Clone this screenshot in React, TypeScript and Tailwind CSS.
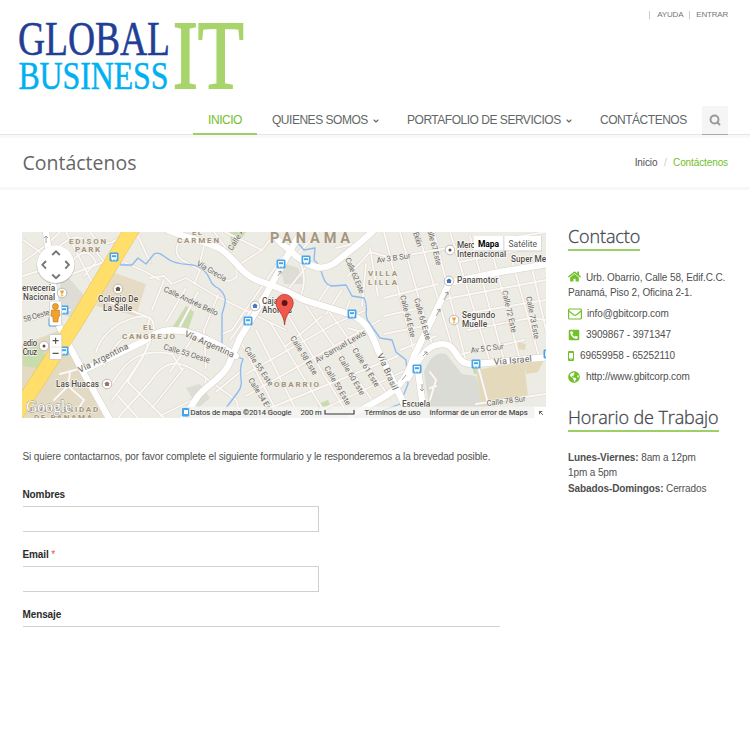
import React from "react";
import { FaHome, FaPhoneSquareAlt, FaGlobeAmericas } from "react-icons/fa";
import { ChevronDown, Search } from "lucide-react";

const SANS = "font-['Liberation_Sans',Arial,sans-serif]";
const OPEN = "font-['Open_Sans',sans-serif]";

function Logo() {
  return (
    <svg className="block h-[96px] w-[260px]" viewBox="0 0 260 96" fontFamily="Liberation Serif, serif">
      <text x="18" y="55" fontSize="48" textLength="152" lengthAdjust="spacingAndGlyphs" fill="#223f94" stroke="#223f94" strokeWidth=".5">GLOBAL</text>
      <text x="18.4" y="88.5" fontSize="41" textLength="150" lengthAdjust="spacingAndGlyphs" fill="#00b0f0" stroke="#00b0f0" strokeWidth=".5">BUSINESS</text>
      <text x="172.8" y="88" fontSize="97" textLength="71" lengthAdjust="spacingAndGlyphs" fill="#a8d56b" stroke="#a8d56b" strokeWidth="1.8">IT</text>
    </svg>
  );
}

const minorRoads = [
  // Edison Park
  "M23 262 L45 246 L60 232", "M23 240 L40 252", "M55 250 C70 236 80 232 92 246 L104 262 L72 274", "M66 232 L96 290",
  "M90 232 C98 244 108 246 116 240", "M72 262 C80 250 90 250 96 262 L84 276", "M23 300 L50 288 L60 320", "M30 320 L70 310", "M23 276 L48 268",
  "M124 262 L146 272 L160 280", "M104 300 L150 318 L146 330", "M138 236 L150 262",
  // El Carmen
  "M180 240 C174 250 176 258 186 262 L200 270 L194 284", "M204 246 L200 262", "M150 278 L164 276 L172 284 L186 278 L216 296 L286 330", "M164 280 L152 310", "M186 288 L166 322", "M198 292 L178 330", "M218 295 L204 330 L206 368", "M236 268 C240 282 226 284 218 276",
  "M225 232 L262 250 L276 232", "M262 250 L240 264", "M300 232 L240 318", "M286 262 L230 340", "M310 262 L286 292", "M214 232 L226 248",
  // El Cangrejo
  "M96 352 C104 326 136 312 150 318 C160 326 150 352 112 400", "M104 366 C116 338 132 328 146 336 C152 350 138 362 128 382", "M112 384 C126 360 140 348 172 354 L182 370", "M150 382 C168 354 184 362 206 378 L236 400 L242 418", "M184 368 L152 408", "M118 396 L138 418", "M128 382 L164 418", "M150 382 L118 418", "M206 378 L204 394 L160 416", "M216 392 L240 372", "M222 334 L232 330 L244 312", "M170 372 L198 330",
  "M60 374 L90 366 M70 372 L68 386 L54 400 M68 386 L84 400 L76 412",
  // Obarrio
  "M286 312 L350 418", "M306 306 L376 406", "M328 310 L390 398", "M256 330 L300 418", "M270 322 L328 418", "M242 344 L280 418", "M246 374 L334 324 L366 310", "M246 396 L380 320", "M270 408 L398 356", "M304 418 L406 370", "M286 346 L322 316", "M348 328 L368 334",
  "M300 262 C308 280 302 292 300 298", "M314 308 L330 284", "M326 314 L342 290", "M346 310 L350 300", "M318 232 L296 256",
  // Villa Lilla and the eastern grid
  "M336 248 L362 242", "M348 276 L370 252 L392 258", "M366 264 L362 306", "M370 248 L378 296", "M384 232 L416 360", "M400 232 L432 344", "M418 232 L452 346", "M434 232 L466 362", "M450 232 L490 362", "M470 236 L504 360", "M492 252 L520 360", "M512 260 L540 360", "M532 268 L546 330",
  "M392 258 L436 250 L546 232", "M384 298 L438 284", "M384 316 L420 308", "M384 334 L424 326", "M400 350 L436 336", "M462 314 L546 300", "M468 330 L530 318 L546 320", "M462 354 L524 340", "M440 300 L546 280", "M460 262 L540 246",
  "M478 366 L492 418", "M476 404 L546 394",
  "M430 400 L436 380 L430 372 M436 386 L430 388",
];

const majorRoads = [
  "M46 232 L59 326 L82 370 L110 420",
  "M84 370 L146 340 C160 328 172 330 184 331 C204 336 222 346 236 356",
  "M182 420 L198 396 C208 384 220 380 228 366 L240 338 L260 305 L284 262 L302 230",
  "M168 230 C190 240 212 242 222 250 C236 260 242 276 262 282 C282 288 292 294 304 300 L346 313 C364 318 370 328 378 350 L404 404",
  "M278 240 L296 256 C312 268 322 272 336 262 C348 252 360 244 374 230",
  "M350 416 L382 398 C400 388 408 376 414 356 L448 286",
  "M408 378 C420 356 430 340 448 345 C460 352 456 366 476 364 L548 357",
  "M448 283 L500 272 L548 264",
  "M418 370 L422 400",
];

const label = { fontFamily: "Roboto, Noto Sans, sans-serif" };

type L = { x: number; y: number; t: string; w: number; r?: number; s?: number };
const streets: L[] = [
  { x: 196, y: 265, t: "Vía Grecia", w: 33, r: 30 },
  { x: 163, y: 291, t: "Calle Andrés Bello", w: 59, r: 25 },
  { x: 232, y: 251, t: "Calle A", w: 24, r: -58 },
  { x: 80, y: 373, t: "Vía Argentina", w: 55, r: -27, s: 8.8 },
  { x: 184, y: 336, t: "Vía Argentina", w: 53, r: 24, s: 8.8 },
  { x: 163, y: 349, t: "Calle 53 Oeste", w: 48, r: 17 },
  { x: 24, y: 322, t: "58 Oeste", w: 27, r: -16 },
  { x: 244, y: 349, t: "Calle 55 Este", w: 45, r: 56 },
  { x: 248, y: 380, t: "Calle 54 Este", w: 42, r: 58 },
  { x: 290, y: 338, t: "Calle 58 Este", w: 44, r: 58 },
  { x: 324, y: 368, t: "Calle 59 Este", w: 44, r: 59 },
  { x: 338, y: 358, t: "Calle 60 Este", w: 44, r: 59 },
  { x: 352, y: 350, t: "Calle 61 Este", w: 44, r: 58 },
  { x: 317, y: 363, t: "Av Samuel Lewis", w: 57, r: -30 },
  { x: 345, y: 259, t: "Calle 62 Este", w: 38, r: 67 },
  { x: 400, y: 296, t: "Calle 64 Este", w: 43, r: 76 },
  { x: 414, y: 299, t: "Calle 65 Este", w: 43, r: 74 },
  { x: 426, y: 226, t: "Calle 67 Este", w: 41, r: 75 },
  { x: 502, y: 291, t: "Calle 72 Este", w: 43, r: 77 },
  { x: 526, y: 297, t: "Calle 73 Este", w: 43, r: 79 },
  { x: 377, y: 263, t: "Av 3 B Sur", w: 34, r: -8 },
  { x: 471, y: 353, t: "Av 5 C Sur", w: 33, r: -7 },
  { x: 377, y: 355, t: "Vía Brasil", w: 39, r: 66, s: 8.8 },
  { x: 494, y: 365, t: "Vía Israel", w: 38, r: -5, s: 9 },
  { x: 487, y: 406, t: "Calle 78 Sur", w: 39, r: -7 },
  { x: 413, y: 233, t: "Belén", w: 15, r: 72 },
];
const places: L[] = [
  { x: 22, y: 291, t: "ervecería", w: 33 }, { x: 23, y: 300, t: "Nacional", w: 32 },
  { x: 98, y: 302, t: "Colegio De", w: 40 }, { x: 103, y: 311, t: "La Salle", w: 29 },
  { x: 23, y: 346, t: "adio", w: 14 }, { x: 22.5, y: 355, t: "Cruz", w: 14.5 },
  { x: 56, y: 387, t: "Las Huacas", w: 43 }, { x: 262, y: 304, t: "Caja de", w: 27 }, { x: 262, y: 313, t: "Ahorros", w: 30 },
  { x: 457, y: 248, t: "Mercado", w: 31 }, { x: 457, y: 257, t: "Internacional", w: 49 }, { x: 511, y: 262, t: "Super Mer", w: 38 },
  { x: 457, y: 283, t: "Panamotor", w: 41 }, { x: 462, y: 318, t: "Segundo", w: 33 }, { x: 462, y: 327, t: "Muelle", w: 25 },
  { x: 402, y: 407, t: "Escuela", w: 28 },
];
const areas: L[] = [
  { x: 69, y: 244, t: "EDISON", w: 37 }, { x: 75, y: 252, t: "PARK", w: 25 },
  { x: 192, y: 235, t: "EL", w: 10 }, { x: 177, y: 243, t: "CARMEN", w: 42 },
  { x: 143, y: 330, t: "EL", w: 10 }, { x: 122, y: 339, t: "CANGREJO", w: 53 },
  { x: 368, y: 276, t: "VILLA", w: 29 }, { x: 368, y: 285, t: "LILLA", w: 29 },
  { x: 274, y: 387, t: "OBARRIO", w: 45 },
  { x: 30, y: 412, t: "UNIVERSIDAD", w: 68 }, { x: 34, y: 420, t: "DE PANAMÁ", w: 58 },
];
const stops = [[114, 257], [64, 310], [281, 264], [306, 260], [248, 321], [352, 314], [417, 369], [476, 364], [64, 351], [186, 412], [548, 354], [53, 322]];

function Labels({ items, size, fill, weight, halo }: { items: L[]; size: number; fill: string; weight: number; halo: string }) {
  return (
    <g style={label} fill={fill} fontWeight={weight} stroke={halo} strokeWidth="1.4" strokeOpacity=".8" strokeLinejoin="round" paintOrder="stroke">
      {items.map((l, i) => (
        <text key={i} x={l.x} y={l.y} fontSize={l.s ?? size} textLength={l.w} lengthAdjust="spacing" transform={`rotate(${l.r ?? 0} ${l.x} ${l.y})`}>{l.t}</text>
      ))}
    </g>
  );
}

function StreetMap() {
  return (
    <svg className="block h-[186px] w-[524px]" viewBox="22 232 524 186">
      <rect x="22" y="232" width="525" height="187" fill="#ecebe4" />
      <path d="M22 345 L60 330 L104 418 H22Z" fill="#e3dac3" />
      <path d="M112 272 L146 284 L136 316 L96 306Z" fill="#e6dcc5" />
      <path d="M62 270 L88 300 L72 318 L58 312Z M280 262 L298 268 L304 284 L284 284Z M186 388 l14 -4 10 14 -12 10Z" fill="#dddcd5" />
      <path d="M23 350 l14 -4 10 10 -8 12 -16 -2Z M172 328 l14 -22 8 6 -6 18Z M230 232 h16 l-14 20Z M318 404 l10 -4 4 10 h-14Z M472 366 h9 v8 h-7Z" fill="#c8dcae" />
      <path d="M424 372 Q432 350 446 354 L462 374 L476 376 L486 412 H430Z" fill="#dbdbd5" />
      <path d="M476 370 L524 362 L528 396 L482 408Z M524 362 l20 -2 -6 12 -12 2Z M518 342 l8 2 -1 6 -8 -1Z" fill="#e5d9bc" />
      <g fill="none" strokeLinecap="round" strokeLinejoin="round">
        <g stroke="#e0d6cf" strokeWidth="3">{minorRoads.map((d) => <path key={d} d={d} />)}</g>
        <g stroke="#fbf8f5" strokeWidth="1.9">{minorRoads.map((d) => <path key={d} d={d} />)}</g>
        <g stroke="#8db9ee" strokeWidth="1.3">
          <path d="M116 256 L121 265 L132 265 L138 258 L146 264 L154 254 C162 250 166 262 178 263 C188 266 192 262 202 269 C212 276 208 284 218 288 C228 296 226 302 222 314 L222 346 L230 354 L243 359 C236 374 246 382 238 392 L226 408" />
          <path d="M297 242 L304 250 L315 248 L314 260 C324 266 320 284 332 286 L346 285 L352 296 L364 298 C370 308 362 314 370 324 L380 338 L392 340 L396 352 L406 360 L408 384 L400 404 L384 410" />
        </g>
        <g stroke="#d9d0ca" strokeWidth="7.4">{majorRoads.map((d) => <path key={d} d={d} />)}</g>
        <g stroke="#fff" strokeWidth="6.4">{majorRoads.map((d) => <path key={d} d={d} />)}</g>
        <path d="M134 226 L76 322 L16 414" stroke="#e8c766" strokeWidth="15.5" />
        <path d="M134 226 L76 322 L16 414" stroke="#ffdf69" strokeWidth="14.3" />
      </g>
      <g fill="none" stroke="#8b8b88" strokeWidth=".8">
        <path d="M46 243 v-7 m-2 2 2 -2 2 2 M278 276 l3 -5 m-3 1 3 -1 0 3 M444 300 l4 -8 m-3 1 3 -1 0 3 M436 316 l4 -7 m-3 1 3 -1 0 3 M423 356 l4 -4 m-3 0 h3 v3 M422 384 v7 m-2 -2 2 2 2 -2 M402 380 l4 -5" />
      </g>
      {stops.map(([x, y]) => (
        <g key={`${x}-${y}`} transform={`translate(${x} ${y})`}>
          <rect x="-4.5" y="-4.5" width="9" height="9" rx="1.4" fill="#46a5ea" />
          <path d="M-2.8 -3 h5.6 v5.4 h-1 v1.1 h-1 v-1.1 h-1.6 v1.1 h-1 v-1.1 h-1Z" fill="#fff" />
          <path d="M-2 -1.8 h4 v2 h-4Z" fill="#46a5ea" />
        </g>
      ))}
      <Labels items={areas} size={8} fill="#a29379" weight={700} halo="#f5f3ee" />
      <g style={label}>
        <text x="270" y="243" fontSize="14.5" fontWeight="700" textLength="80" fill="#a5967d" stroke="#f5f3ee" strokeWidth="1.2" paintOrder="stroke">PANAMA</text>
      </g>
      <Labels items={streets} size={7.8} fill="#6a6864" weight={400} halo="#f5f3ee" />
      <Labels items={places} size={8.3} fill="#514b45" weight={500} halo="#fff" />
      {[[62, 293, "#e6a33a"], [118, 289, "#6b5546"], [44, 346, "#5b4f48"], [107, 384, "#9b7462"], [255, 306, "#4c77b9"], [450, 250, "#5b4f48"], [449, 281, "#3c75bd"], [454, 320, "#e6a33a"]].map(([x, y, c]) => (
        <g key={`${x}`} transform={`translate(${x} ${y})`}>
          <circle r="4.8" fill="#fff" stroke="#a7a29d" strokeWidth=".7" />
          {c === "#e6a33a" ? <path d="M-2 -2.5 h4 l-1 3 h-.6 v2 h1 v.8 h-2.8 v-.8 h1 v-2 H-1Z" fill="#e6a33a" /> : c === "#5b4f48" ? <circle r="1.5" fill="#5b4f48" /> : <path d="M-3 -.4 L0 -2.4 L3 -.4 H2 V2 H-2 V-.4Z" fill={String(c)} />}
        </g>
      ))}
      {/* location pin */}
      <path d="M284.6 325 C284 313 276 310 276 303 A8.6 8.6 0 0 1 293.2 303 C293.2 310 285.2 313 284.6 325Z" fill="#f1584c" stroke="#b5322a" strokeWidth=".8" />
      <circle cx="284.6" cy="303" r="2.9" fill="#5c1712" />
      {/* pan and zoom controls */}
      <circle cx="55.7" cy="265" r="19.2" fill="#777" opacity=".35" />
      <circle cx="55.7" cy="264.3" r="18.7" fill="#fff" />
      <path d="M52.2 255 l3.8 -3.6 3.8 3.6 M52.2 274.5 l3.8 3.6 3.8 -3.6 M46 261 l-3.6 3.8 3.6 3.8 M65.3 261 l3.6 3.8 -3.6 3.8" fill="none" stroke="#777" strokeWidth="1.9" />
      <rect x="49.5" y="301" width="12" height="24.5" rx="1.5" fill="#fff" stroke="#c6c3be" strokeWidth=".6" />
      <circle cx="55.4" cy="306.4" r="3" fill="#f2a229" stroke="#a86719" strokeWidth=".5" />
      <path d="M51.5 310 h7.8 l.6 6 -1.4 .7 -.6 5.3 h-4.6 l-.6 -5.3 -1.8 -.7Z" fill="#f2a229" stroke="#a86719" strokeWidth=".5" />
      <rect x="49.5" y="334.5" width="12.3" height="25" rx="1" fill="#fff" stroke="#bdbab5" strokeWidth=".6" />
      <path d="M51 347 h9.4" stroke="#ddd" strokeWidth=".7" />
      <path d="M52.6 340.7 h6 m-3 -3 v6 M52.6 353.3 h6" stroke="#555" strokeWidth="1.2" />
      <text x="26" y="412" fontSize="17" fontFamily="Liberation Serif, serif" fill="#fff" stroke="#96948e" strokeWidth="1" paintOrder="stroke" textLength="46" lengthAdjust="spacingAndGlyphs">Google</text>
      {/* map type switch */}
      <rect x="474" y="236" width="68" height="15.4" fill="#bbb" opacity=".6" />
      <rect x="474" y="236" width="29.4" height="14.5" fill="#fff" />
      <rect x="504.3" y="236" width="37" height="14.5" fill="#fff" />
      <text x="478" y="246.8" fontSize="8.5" fontWeight="700" style={label} textLength="21" fill="#000">Mapa</text>
      <text x="508.5" y="246.8" fontSize="8.5" style={label} textLength="28.5" fill="#555">Satélite</text>
      {/* attribution strip */}
      <rect x="181" y="406.5" width="366" height="11.5" fill="#f5f5f3" opacity=".78" />
      <rect x="182" y="408" width="7" height="8.5" rx="1.2" fill="#46a5ea" />
      <path d="M184 410 h4 v4 h-4Z" fill="#fff" />
      <g fontSize="7.6" style={label} fill="#444" stroke="#444" strokeWidth=".12">
        <text x="190.5" y="415" textLength="101">Datos de mapa ©2014 Google</text>
        <text x="300.5" y="415" textLength="21">200 m</text>
        <text x="364.5" y="415" textLength="56">Términos de uso</text>
        <text x="429.5" y="415" textLength="98">Informar de un error de Maps</text>
      </g>
      <path d="M325 410 v4 h29 v-4" fill="none" stroke="#333" strokeWidth="1.1" />
      <rect x="534.5" y="407" width="11.5" height="11" fill="#fff" />
      <path d="M543 415 l-3.5 -3.5 m0 2.8 v-2.8 h2.8" fill="none" stroke="#555" strokeWidth=".9" />
    </svg>
  );
}

function NavItem({ children, className = "", arrow = false }: { children: React.ReactNode; className?: string; arrow?: boolean }) {
  return (
    <a className={`flex items-center whitespace-nowrap text-[12px] tracking-[-0.48px] ${className}`}>
      {children}
      {arrow && <ChevronDown className="ml-[4px] mt-px h-[8px] w-[8px]" strokeWidth={3.4} />}
    </a>
  );
}

function Field({ name, required = false }: { name: string; required?: boolean }) {
  return (
    <div className="h-[60px]">
      <label className="block h-[19px] font-bold leading-[15px] text-[#2b2b2b]">
        {name}
        {required && <span className="font-normal text-[#f04c3c]"> *</span>}
      </label>
      <div className="h-[26px] w-[296px] border-y border-r border-[#d3d1cb] border-r-[#cfcfd6]" />
    </div>
  );
}

function SideTitle({ children, className = "" }: { children: React.ReactNode; className?: string }) {
  return (
    <h3 className={`${OPEN} h-[26px] w-fit whitespace-nowrap border-b-2 border-b-[#9bd066] text-[18px] font-light leading-[22px] text-[#42474d] [-webkit-text-stroke:0.3px_#42474d] ${className}`}>{children}</h3>
  );
}

export default function App() {
  return (
    <div className={`${SANS} h-[750px] w-[750px] overflow-hidden bg-white text-[10px] tracking-[-0.11px] text-[#4f4f4f]`}>
      <header className="flex h-[135px] flex-col">
        <div className="flex h-[106px] justify-between">
          <Logo />
          <div className="mr-[22px] mt-[10px] flex h-[10px] items-center text-[8px] leading-[10px] tracking-[-0.2px] text-[#777]">
            <span className="mr-[7px] h-[8px] w-px bg-[#ccc]" />AYUDA
            <span className="mx-[6px] h-[8px] w-px bg-[#ccc]" />ENTRAR
          </div>
        </div>
        <nav className="flex h-[29px] border-b border-b-[#e5e5e5] pl-[193px] text-[#626767]">
          <NavItem className="h-[29px] w-[64px] justify-center border-b-2 border-b-[#9bd066] text-[#72c02c]">INICIO</NavItem>
          <NavItem className="ml-[15px] w-[135px]" arrow>QUIENES SOMOS</NavItem>
          <NavItem className="w-[193px]" arrow>PORTAFOLIO DE SERVICIOS</NavItem>
          <NavItem className="w-[102px]">CONTÁCTENOS</NavItem>
          <span className="flex h-[29px] w-[26px] items-center justify-center border-b border-b-[#aaa] bg-[#f5f5f5]">
            <Search className="h-[12px] w-[12px] text-[#999]" strokeWidth={3.8} />
          </span>
        </nav>
      </header>
      <section className="flex h-[55px] items-center justify-between border-b-[3px] border-t-[3px] border-b-[#f8f6f6] border-t-[#faf8f8] pl-[22.5px] pr-[22px]">
        <h1 className={`${OPEN} text-[19.5px] font-normal leading-6 tracking-normal text-[#666]`}>Contáctenos</h1>
        <div className="flex leading-[15px]">
          <span>Inicio</span><span className="mx-[6.5px] text-[#ccc]">/</span><span className="text-[#72c02c]">Contáctenos</span>
        </div>
      </section>
      <main className="flex px-[22px] pt-[42px]">
        <div className="w-[524px] shrink-0">
          <StreetMap />
          <p className="ml-[0.5px] mt-[31px] whitespace-nowrap leading-[15px]">Si quiere contactarnos, por favor complete el siguiente formulario y le responderemos a la brevedad posible.</p>
          <form className="mt-[23px] pl-[0.5px]">
            <Field name="Nombres" />
            <Field name="Email" required />
            <label className="block h-[20px] w-[477px] border-b border-b-[#d3d1cb] font-bold leading-[15px] text-[#2b2b2b]">Mensaje</label>
          </form>
        </div>
        <aside className="ml-[22px] w-[165px] whitespace-nowrap leading-[15px]">
          <SideTitle className="-mt-[7px]">Contacto</SideTitle>
          <ul className="mt-[19px]">
            <li className="h-[36px]">
              <FaHome className="mr-[5px] inline h-[13px] w-[13px] align-[-2px] text-[#72c02c]" />Urb. Obarrio, Calle 58, Edif.C.C.<br />Panamá, Piso 2, Oficina 2-1.
            </li>
            <li className="flex h-[21px] items-start">
              <svg className="mr-[5px] mt-[2px] h-[12px] w-[14px]" viewBox="0 0 14 12" fill="none" stroke="#72c02c" strokeWidth="1.2">
                <rect x=".6" y="1" width="12.8" height="10" rx="1" /><path d="M.8 3 L5.6 6.8 Q7 7.8 8.4 6.8 L13.2 3" />
              </svg>
              info@gbitcorp.com
            </li>
            <li className="flex h-[21px] items-start"><FaPhoneSquareAlt className="mr-[6px] mt-[2px] h-[12px] w-[12px] text-[#72c02c]" />3909867 - 3971347</li>
            <li className="flex h-[21px] items-start">
              <svg className="mr-[6px] mt-[3px] h-[10px] w-[6px]" viewBox="0 0 6 10"><path fill="#72c02c" fillRule="evenodd" d="M1 0h4a1 1 0 0 1 1 1v8a1 1 0 0 1-1 1H1a1 1 0 0 1-1-1V1a1 1 0 0 1 1-1ZM1 2v5.5h4V2ZM2.5 8.3v.8h1v-.8Z" /></svg>
              69659958 - 65252110
            </li>
            <li className="flex h-[21px] items-start"><FaGlobeAmericas className="mr-[6px] mt-[2px] h-[12px] w-[12px] text-[#72c02c]" />http://www.gbitcorp.com</li>
          </ul>
          <SideTitle className="mt-[16px]">Horario de Trabajo</SideTitle>
          <p className="mt-[17.5px] leading-[15.5px]"><b>Lunes-Viernes:</b> 8am a 12pm<br />1pm a 5pm<br /><b>Sabados-Domingos:</b> Cerrados</p>
        </aside>
      </main>
    </div>
  );
}
